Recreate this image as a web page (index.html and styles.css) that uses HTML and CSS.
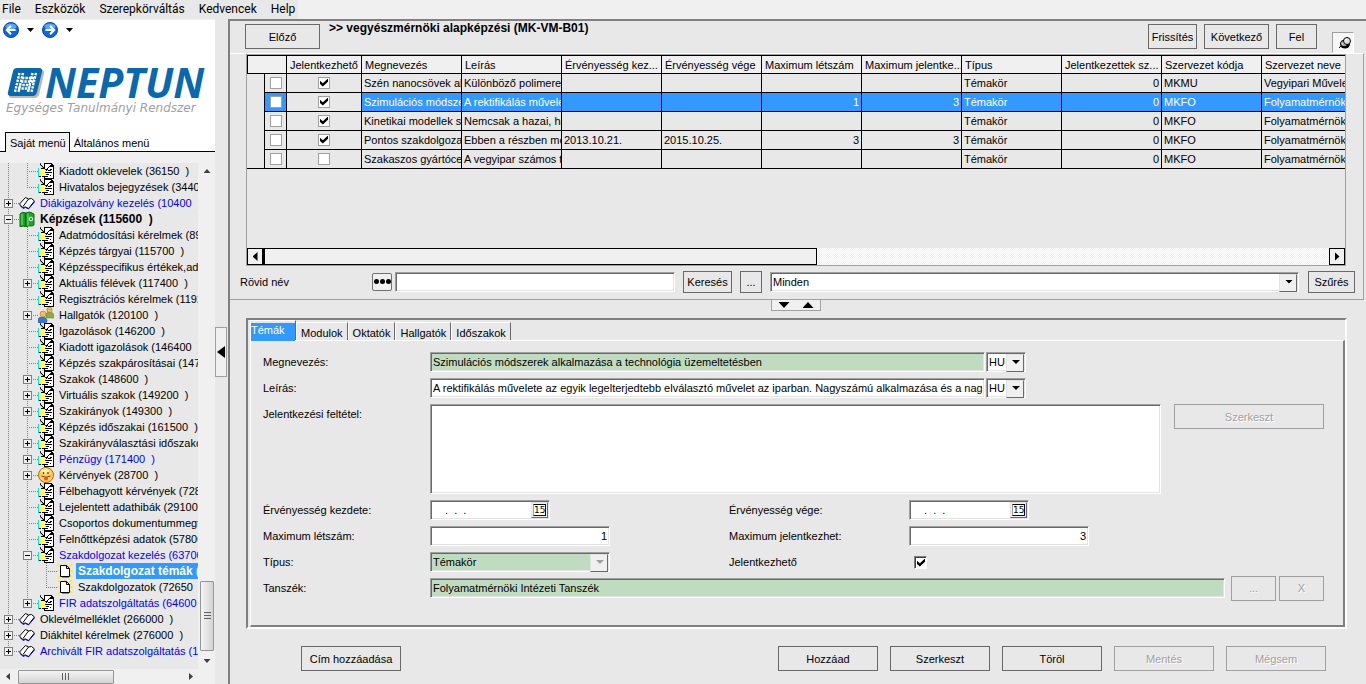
FILE: index.html
```html
<!DOCTYPE html>
<html lang="hu">
<head>
<meta charset="utf-8">
<title>Neptun</title>
<link rel="stylesheet" href="styles.css">
</head>
<body>
<svg class="defs" aria-hidden="true">
  <symbol id="i-doc" viewBox="0 0 16 16" shape-rendering="crispEdges">
    <path d="M6 0h7l3 3v13H6z" fill="#000"/>
    <path d="M7 1h6v3h2v11H7z" fill="#fff"/>
    <path d="M11 3h2v1h-2zM12 6h2v1h-2zM13 9h1v1h-1zM9 13h1v1H9zM12 12h1v1h-1z" fill="#000"/>
    <path d="M0 5h1v9H0z" fill="#00e5ee"/>
    <path d="M1 6h7v1h3v3h-1v2H8v1H3v-1H1z" fill="#ffff66"/>
    <path d="M3 5h3v1H3zM8 6h2v1H8zM10 7h3v1h-3zM7 9h6v1H7zM8 11h3v1H8zM4 13h5v1H4zM1 13h2v1H1z" fill="#000"/>
    <path d="M2 1h1v1h1v1h1v1h1v1h1v1h1v1h1v1H8V7H7V6H6V5H5V4H4V3H3V2H2z" fill="#000"/>
    <path d="M2 2h1v1h1v1h1v1H4V4H3V3H2z" fill="#c8b400"/>
    <path d="M2 0h1v1H2z" fill="#d00"/>
    <path d="M12 2h1v1h-1v1h-1v1h-1v1H9V5h1V4h1V3h1z" fill="#000"/>
  </symbol>
  <symbol id="i-book" viewBox="0 0 16 16">
    <path d="M.5 9L6.500 2.500l3 1.500 3-.5 3 2.500-6 7.500-3-1.500-3 .5z" fill="#fff" stroke="#000"/>
    <path d="M9.500 4L4 11.500" stroke="#000" fill="none"/>
    <path d="M1 10.500L4 13.500l2.500-1 3 1.500 6-7" stroke="#1a1aa0" fill="none"/>
  </symbol>
  <symbol id="i-green" viewBox="0 0 16 16">
    <path d="M1 3q2-3 6-1q4-2 6 0l2 1v11l-2 1q-3-1-6 1q-3-2-6 0z" fill="#1fa52b" stroke="#0b6a17"/>
    <path d="M3 3v11M9 2.500v12" stroke="#7be07c"/><path d="M6.500 2v13" stroke="#0b6a17" stroke-width="1.500"/>
    <circle cx="12" cy="8" r="1.800" fill="none" stroke="#fff"/>
  </symbol>
  <symbol id="i-users" viewBox="0 0 16 16">
    <path d="M8 11V8q0-3 3.500-3T16 8v3z" fill="#8cae3c" stroke="#5c7c20" stroke-width=".5"/><circle cx="11.500" cy="3" r="2.700" fill="#e7b75f" stroke="#93651c" stroke-width=".5"/>
    <path d="M0 16v-3q0-3 4-3t5 3v2q-4 2-9 1z" fill="#3d79d0" stroke="#1c4b93" stroke-width=".5"/><circle cx="5" cy="7" r="3" fill="#eebf68" stroke="#93651c" stroke-width=".5"/>
  </symbol>
  <symbol id="i-smile" viewBox="0 0 16 16">
    <circle cx="8" cy="8" r="7.500" fill="#ffcf5c" stroke="#a86c12"/>
    <ellipse cx="7" cy="4" rx="4" ry="2.500" fill="#fff2b0"/>
    <path d="M5.500 5v2M10 5v2" stroke="#704400" stroke-width="1.300"/>
    <path d="M3.500 9q4.500 2.500 9 0" stroke="#704400" fill="none"/><path d="M6 10.500h4v1.500q-2 3-4 0z" fill="#ee4939"/>
  </symbol>
  <symbol id="i-new" viewBox="0 0 16 16">
    <path d="M1 1l4 4M15 1l-4 4M1 15l4-4M15 14l-4-4M8 0v3M0 8h3M16 8h-3" stroke="#ffee00" stroke-width="1.500"/>
    <path d="M5 4h7v11H5z" fill="#888"/>
    <path d="M3.500 2.500h6l3 3v8h-9z" fill="#fff" stroke="#000"/><path d="M9.500 2.500v3h3" fill="none" stroke="#000"/>
  </symbol>
</svg>

<nav class="menubar"><a href="#">File</a><a href="#">Eszközök</a><a href="#">Szerepkörváltás</a><a href="#">Kedvencek</a><a href="#">Help</a></nav>

<div class="app">
  <aside class="side">
    <div class="brand">
      <div class="history">
        <button class="ball" aria-label="Vissza"><svg viewBox="0 0 16 16"><circle cx="8" cy="8" r="7.500" fill="#1167dc" stroke="#0a46a8"/><ellipse cx="8" cy="4.500" rx="5.500" ry="3" fill="#5aa6ff"/><path d="M12.500 8H4M8 3.800L3.800 8 8 12.200" fill="none" stroke="#fff" stroke-width="2"/></svg></button>
        <button class="drop" aria-label="Előzmények"></button>
        <button class="ball" aria-label="Előre"><svg viewBox="0 0 16 16"><circle cx="8" cy="8" r="7.500" fill="#1167dc" stroke="#0a46a8"/><ellipse cx="8" cy="4.500" rx="5.500" ry="3" fill="#5aa6ff"/><path d="M3.500 8H12M8 3.800L12.200 8 8 12.200" fill="none" stroke="#fff" stroke-width="2"/></svg></button>
        <button class="drop" aria-label="Következők"></button>
      </div>
      <div class="logo">
        <svg viewBox="0 0 38 31" width="38" height="31">
          <path d="M10 2h24q4 0 3 4l-5 21q-1 3-5 3H5q-4 0-3-3z" fill="#b9b9b9"/>
          <path d="M10 0h22q4 0 3 4l-5 20q-1 4-4 4H4q-4 0-3-4L6 3q1-3 4-3z" fill="#0a68ad"/>
          <g fill="none" stroke="#fff" stroke-width="2.400" stroke-dasharray="2.400 1"><path d="M12.500 5L8 24M16 5l-4.500 19M29 5l-4.500 19M25.500 5L21 24M15 10h12M14 13.500h14M12 17h12M11 20.500h12"/></g>
        </svg>
        <span class="name">NEPTUN</span>
      </div>
      <div class="slogan">Egységes Tanulmányi Rendszer</div>
      <div class="sidetabs"><button class="on">Saját menü</button><button>Általános menü</button></div>
    </div>
    <div class="treebox">
      <ul class="tree">
        <li class="l1"><svg><use href="#i-doc"/></svg><a href="#">Kiadott oklevelek (36150  )</a></li>
        <li class="l1 end"><svg><use href="#i-doc"/></svg><a href="#">Hivatalos bejegyzések (34400  )</a></li>
        <li class="l0"><button class="plus" aria-label="Kinyit"></button><svg><use href="#i-book"/></svg><a href="#" class="blue">Diákigazolvány kezelés (10400  )</a></li>
        <li class="l0"><button class="minus" aria-label="Becsuk"></button><svg><use href="#i-green"/></svg><a href="#" class="strong">Képzések (115600  )</a></li>
        <li class="l1"><svg><use href="#i-doc"/></svg><a href="#">Adatmódosítási kérelmek (89000  )</a></li>
        <li class="l1"><svg><use href="#i-doc"/></svg><a href="#">Képzés tárgyai (115700  )</a></li>
        <li class="l1"><svg><use href="#i-doc"/></svg><a href="#">Képzésspecifikus értékek,adatok</a></li>
        <li class="l1"><button class="plus" aria-label="Kinyit"></button><svg><use href="#i-doc"/></svg><a href="#">Aktuális félévek (117400  )</a></li>
        <li class="l1"><svg><use href="#i-doc"/></svg><a href="#">Regisztrációs kérelmek (119200  )</a></li>
        <li class="l1"><button class="plus" aria-label="Kinyit"></button><svg><use href="#i-users"/></svg><a href="#">Hallgatók (120100  )</a></li>
        <li class="l1"><svg><use href="#i-doc"/></svg><a href="#">Igazolások (146200  )</a></li>
        <li class="l1"><svg><use href="#i-doc"/></svg><a href="#">Kiadott igazolások (146400  )</a></li>
        <li class="l1"><svg><use href="#i-doc"/></svg><a href="#">Képzés szakpárosításai (147100  )</a></li>
        <li class="l1"><button class="plus" aria-label="Kinyit"></button><svg><use href="#i-doc"/></svg><a href="#">Szakok (148600  )</a></li>
        <li class="l1"><button class="plus" aria-label="Kinyit"></button><svg><use href="#i-doc"/></svg><a href="#">Virtuális szakok (149200  )</a></li>
        <li class="l1"><button class="plus" aria-label="Kinyit"></button><svg><use href="#i-doc"/></svg><a href="#">Szakirányok (149300  )</a></li>
        <li class="l1"><svg><use href="#i-doc"/></svg><a href="#">Képzés időszakai (161500  )</a></li>
        <li class="l1"><button class="plus" aria-label="Kinyit"></button><svg><use href="#i-doc"/></svg><a href="#">Szakirányválasztási időszakok</a></li>
        <li class="l1"><button class="plus" aria-label="Kinyit"></button><svg><use href="#i-doc"/></svg><a href="#" class="blue">Pénzügy (171400  )</a></li>
        <li class="l1"><button class="plus" aria-label="Kinyit"></button><svg><use href="#i-smile"/></svg><a href="#">Kérvények (28700  )</a></li>
        <li class="l1"><svg><use href="#i-doc"/></svg><a href="#">Félbehagyott kérvények (72850  )</a></li>
        <li class="l1"><svg><use href="#i-doc"/></svg><a href="#">Lejelentett adathibák (29100  )</a></li>
        <li class="l1"><svg><use href="#i-doc"/></svg><a href="#">Csoportos dokumentummegtekintés</a></li>
        <li class="l1"><svg><use href="#i-doc"/></svg><a href="#">Felnőttképzési adatok (57800  )</a></li>
        <li class="l1"><button class="minus" aria-label="Becsuk"></button><svg><use href="#i-doc"/></svg><a href="#" class="blue">Szakdolgozat kezelés (63700  )</a></li>
        <li class="l2"><svg><use href="#i-new"/></svg><a href="#" class="strong sel">Szakdolgozat témák (72600  )</a></li>
        <li class="l2 end"><svg><use href="#i-new"/></svg><a href="#">Szakdolgozatok (72650  )</a></li>
        <li class="l1 end"><button class="plus" aria-label="Kinyit"></button><svg><use href="#i-doc"/></svg><a href="#" class="blue">FIR adatszolgáltatás (64600  )</a></li>
        <li class="l0"><button class="plus" aria-label="Kinyit"></button><svg><use href="#i-book"/></svg><a href="#">Oklevélmelléklet (266000  )</a></li>
        <li class="l0"><button class="plus" aria-label="Kinyit"></button><svg><use href="#i-book"/></svg><a href="#">Diákhitel kérelmek (276000  )</a></li>
        <li class="l0 end"><button class="plus" aria-label="Kinyit"></button><svg><use href="#i-book"/></svg><a href="#" class="blue">Archivált FIR adatszolgáltatás (143000  )</a></li>
      </ul>
      <div class="vbar"><i class="tri up"></i><div class="vspace"></div><div class="vthumb"></div><i class="tri down"></i></div>
    </div>
    <div class="hbar"><i class="tri left"></i><div class="hthumb"></div><div class="hspace"></div><i class="tri right"></i></div>
  </aside>
  <div class="split"><button aria-label="Menü elrejtése"><i class="tri left"></i></button></div>

  <main class="main">
    <header class="toolbar">
      <button class="btn prev">Előző</button>
      <h1>&gt;&gt; vegyészmérnöki alapképzési (MK-VM-B01)</h1>
      <button class="btn w49">Frissítés</button>
      <button class="btn w65">Következő</button>
      <button class="btn w41">Fel</button>
      <button class="pin" aria-label="Rögzítés"><svg viewBox="0 0 12 12" width="12" height="12"><path d="M0 11l3-3" stroke="#000"/><ellipse cx="6" cy="7" rx="5" ry="4.500" fill="#000"/><ellipse cx="5" cy="6.500" rx="3" ry="2.500" fill="#bbb"/><circle cx="8" cy="4" r="3.500" fill="#ddd" stroke="#000"/><path d="M6 3.500l2-1.500" stroke="#fff" stroke-width="1.500"/></svg></button>
    </header>

    <section class="list">
      <div class="grid">
        <div class="gridclip">
        <table>
          <colgroup><col class="c1"><col class="c2"><col class="c3"><col span="10" class="c4"></colgroup>
          <thead><tr><th colspan="2" class="first"></th><th>Jelentkezhető</th><th>Megnevezés</th><th>Leírás</th><th>Érvényesség kez...</th><th>Érvényesség vége</th><th>Maximum létszám</th><th>Maximum jelentke...</th><th>Típus</th><th>Jelentkezettek sz...</th><th>Szervezet kódja</th><th>Szervezet neve</th></tr></thead>
          <tbody>
          <tr><td class="gut"></td><td class="ck"><input type="checkbox" aria-label="Kijelölés"></td><td class="ck"><input type="checkbox" checked aria-label="Jelentkezhető"></td><td>Szén nanocsövek alkalmazása</td><td>Különböző polimerek</td><td></td><td></td><td></td><td></td><td>Témakör</td><td class="n">0</td><td>MKMU</td><td>Vegyipari Műveleti</td></tr>
          <tr class="cur"><td class="gut"></td><td class="ck hot"><input type="checkbox" aria-label="Kijelölés"></td><td class="ck"><input type="checkbox" checked aria-label="Jelentkezhető"></td><td>Szimulációs módszerek</td><td>A rektifikálás művelete</td><td></td><td></td><td class="n">1</td><td class="n">3</td><td>Témakör</td><td class="n">0</td><td>MKFO</td><td>Folyamatmérnöki</td></tr>
          <tr><td class="gut"></td><td class="ck"><input type="checkbox" aria-label="Kijelölés"></td><td class="ck"><input type="checkbox" checked aria-label="Jelentkezhető"></td><td>Kinetikai modellek stb.</td><td>Nemcsak a hazai, hanem</td><td></td><td></td><td></td><td></td><td>Témakör</td><td class="n">0</td><td>MKFO</td><td>Folyamatmérnöki</td></tr>
          <tr><td class="gut"></td><td class="ck"><input type="checkbox" aria-label="Kijelölés"></td><td class="ck"><input type="checkbox" checked aria-label="Jelentkezhető"></td><td>Pontos szakdolgozat</td><td>Ebben a részben meg</td><td>2013.10.21.</td><td>2015.10.25.</td><td class="n">3</td><td class="n">3</td><td>Témakör</td><td class="n">0</td><td>MKFO</td><td>Folyamatmérnöki</td></tr>
          <tr><td class="gut last"></td><td class="ck"><input type="checkbox" aria-label="Kijelölés"></td><td class="ck"><input type="checkbox" aria-label="Jelentkezhető"></td><td>Szakaszos gyártócellák</td><td>A vegyipar számos terü</td><td></td><td></td><td></td><td></td><td>Témakör</td><td class="n">0</td><td>MKFO</td><td>Folyamatmérnöki</td></tr>
          </tbody>
        </table>
        </div>
        <div class="gbar"><button aria-label="Balra"><i class="tri left"></i></button><div class="gthumb"></div><div class="gtrack"></div><button aria-label="Jobbra"><i class="tri right"></i></button></div>
      </div>
      <div class="search">
        <label for="q">Rövid név</label>
        <button class="dots" aria-label="Mezők"><i></i><i></i><i></i></button>
        <input class="box q" id="q" type="text">
        <button class="btn w49">Keresés</button>
        <button class="btn more">...</button>
        <span class="combo wide"><select aria-label="Szűrő"><option>Minden</option></select></span>
        <button class="btn filter">Szűrés</button>
      </div>
    </section>
    <button class="updown" aria-label="Osztás"><i class="tri down"></i><i class="tri up"></i></button>

    <section class="book">
      <div class="tabs"><button class="on"><span>Témák</span></button><button>Modulok</button><button>Oktatók</button><button>Hallgatók</button><button>Időszakok</button></div>
      <form class="page">
        <div class="row"><label class="lab" for="f1">Megnevezés:</label><input class="box long green" id="f1" type="text" value="Szimulációs módszerek alkalmazása a technológia üzemeltetésben"><span class="combo lang"><select aria-label="Nyelv"><option>HU</option></select></span></div>
        <div class="row"><label class="lab" for="f2">Leírás:</label><input class="box long" id="f2" type="text" value="A rektifikálás művelete az egyik legelterjedtebb elválasztó művelet az iparban. Nagyszámú alkalmazása és a nagy energia"><span class="combo lang"><select aria-label="Nyelv"><option>HU</option></select></span></div>
        <div class="row tall"><label class="lab" for="f3">Jelentkezési feltétel:</label><textarea class="box" id="f3"></textarea><button type="button" class="btn edit" disabled>Szerkeszt</button></div>
        <div class="row"><label class="lab" for="f4">Érvényesség kezdete:</label><div class="cell"><span class="date"><input class="box" id="f4" type="text" value=".  .  ."><button type="button" aria-label="Naptár"><span>15</span></button></span></div><label class="lab2" for="f5">Érvényesség vége:</label><span class="date"><input class="box" id="f5" type="text" value=".  .  ."><button type="button" aria-label="Naptár"><span>15</span></button></span></div>
        <div class="row"><label class="lab" for="f6">Maximum létszám:</label><div class="cell"><input class="box num" id="f6" type="text" value="1"></div><label class="lab2" for="f7">Maximum jelentkezhet:</label><input class="box num" id="f7" type="text" value="3"></div>
        <div class="row"><label class="lab" for="f8">Típus:</label><div class="cell"><span class="combo type off"><select id="f8" class="green"><option>Témakör</option></select></span></div><label class="lab2" for="f9">Jelentkezhető</label><input type="checkbox" class="sunk" id="f9" checked></div>
        <div class="row"><label class="lab" for="f10">Tanszék:</label><input class="box green dept" id="f10" type="text" value="Folyamatmérnöki Intézeti Tanszék"><button type="button" class="btn w45" disabled>...</button><button type="button" class="btn w45" disabled>X</button></div>
      </form>
    </section>

    <footer class="actions">
      <button class="btn">Cím hozzáadása</button><span class="fill"></span>
      <button class="btn">Hozzáad</button><button class="btn">Szerkeszt</button><button class="btn">Töröl</button><button class="btn" disabled>Mentés</button><button class="btn" disabled>Mégsem</button>
    </footer>
  </main>
</div>
</body>
</html>
```
FILE: styles.css
```css
* { box-sizing: border-box; }
body {
  margin: 0;
  min-height: 100vh;
  display: flex;
  flex-direction: column;
  background: #e8e8e8;
  color: #000;
  font: 11px/14px "Liberation Sans", Arial, sans-serif;
  overflow: hidden;
}
button, input, select, textarea { font: inherit; color: inherit; margin: 0; }
button { padding: 0; background: none; border: 0; white-space: nowrap; }
a { color: inherit; text-decoration: none; }
.defs { display: none; }

.menubar {
  display: flex;
  gap: 14px;
  height: 19px;
  padding-left: 2px;
  background: linear-gradient(90deg, #e8e8e8 298px, #f0f0f0 298px);
  font: 12px/18px Roboto, sans-serif;
}
.app { display: flex; flex: 1; }

/* arrows */
.tri { display: block; width: 8px; height: 8px; background: #000; flex: none; }
.tri.left { width: 5px; clip-path: polygon(100% 0, 0 50%, 100% 100%); }
.tri.right { width: 5px; clip-path: polygon(0 0, 100% 50%, 0 100%); }
.tri.up { height: 5px; clip-path: polygon(0 100%, 50% 0, 100% 100%); }
.tri.down { height: 5px; clip-path: polygon(0 0, 50% 100%, 100% 0); }

/* sidebar */
.side { width: 215px; flex: none; display: flex; flex-direction: column; background: #f0f0f0; }
.brand { background: #fff; border-top: 1px solid #f0f0f0; height: 133px; display: flex; flex-direction: column; }
.history { display: flex; align-items: center; gap: 8px; padding: 2px 3px 0; }
.ball { width: 16px; height: 16px; }
.ball svg { display: block; width: 16px; height: 16px; }
.drop { width: 7px; height: 4px; background: #000; clip-path: polygon(0 0, 50% 100%, 100% 0); }
.logo { display: flex; padding: 30px 0 0 7px; height: 61px; }
.logo svg { flex: none; }
.name { font: italic bold 41px/28px "Open Sans", sans-serif; color: #0a68ad; }
.slogan { padding-left: 6px; font: italic 12px/18px "DejaVu Sans", sans-serif; color: #a0a0a0; white-space: nowrap; }
.sidetabs { display: flex; margin-top: auto; background: linear-gradient(#000, #000) 0 100% / 100% 1px no-repeat; padding-left: 5px; }
.sidetabs button { height: 20px; padding: 2px 3px 0 4px; }
.sidetabs .on { background: #f0f0f0; border: 1px solid #000; border-bottom: 0; padding-top: 1px; }

.treebox { display: flex; flex: 1; padding-top: 11px; }
.tree { list-style: none; margin: 0; padding: 0; width: 198px; background: #e8e8e8; overflow: hidden; }
.tree li {
  --dot: linear-gradient(#808080 50%, transparent 50%);
  --dash: linear-gradient(90deg, #808080 50%, transparent 50%);
  height: 16px;
  display: flex;
  align-items: center;
  position: relative;
  white-space: pre;
}
.tree svg { width: 16px; height: 16px; flex: none; }
.tree a { line-height: 16px; padding: 0 2px; margin-left: 3px; }
.l0 { padding-left: 19px; }
.l1 { padding-left: 38px; }
.l2 { padding-left: 57px; }
.tree li::before { content: ""; position: absolute; top: 0; left: 8px; width: 1px; height: 16px; background: var(--dot) 0 0 / 1px 2px; }
.tree li::after { content: ""; position: absolute; top: 0; height: 16px; pointer-events: none; }
.l0::after { left: 8px; width: 11px; background: var(--dash) 0 8px / 2px 1px repeat-x; }
.l1::after { left: 27px; width: 11px; background: var(--dash) 0 8px / 2px 1px repeat-x, var(--dot) 0 0 / 1px 2px repeat-y; }
.l2::after { left: 46px; width: 11px; background: var(--dash) 0 8px / 2px 1px repeat-x, var(--dot) 0 0 / 1px 2px repeat-y; }
.tree .l2::before { width: 20px; background: var(--dot) 0 0 / 1px 2px repeat-y, var(--dot) 19px 0 / 1px 2px repeat-y; }
.tree .end::after { height: 9px; }
.tree .l0.end::before { height: 9px; }
.plus, .minus {
  position: absolute; z-index: 1; top: 4px; left: 4px; width: 9px; height: 9px;
  border: 1px solid #808080;
  background: linear-gradient(#000, #000) 1px 3px / 5px 1px no-repeat, linear-gradient(#000, #000) 3px 1px / 1px 5px no-repeat, #f0f0f0;
}
.minus { background: linear-gradient(#000, #000) 1px 3px / 5px 1px no-repeat, #f0f0f0; }
.l1 .plus, .l1 .minus { left: 23px; }
.blue { color: #0000ff; }
.strong { font-weight: bold; font-size: 12px; }
.sel { background: #3399ff; color: #fff; }

.vbar { width: 16px; margin-left: 1px; display: flex; flex-direction: column; align-items: center; padding: 6px 0 6px; }
.vbar .tri, .hbar .tri { background: #404040; }
.vbar .tri { width: 7px; height: 4px; }
.vspace { flex: 1; }
.vthumb { width: 14px; height: 70px; margin-bottom: 8px; border: 1px solid #959595; border-radius: 1px;
  background: repeating-linear-gradient(#606060 0 1px, transparent 1px 3px) 50% 50% / 7px 8px no-repeat, linear-gradient(90deg, #f4f4f4, #d4d4d4); }
.hbar { height: 15px; display: flex; align-items: center; padding: 0 22px 0 6px; }
.hbar .tri { width: 4px; height: 7px; }
.hthumb { width: 96px; height: 14px; margin-left: 8px; border: 1px solid #959595; border-radius: 1px;
  background: repeating-linear-gradient(90deg, #606060 0 1px, transparent 1px 3px) 50% 50% / 8px 7px no-repeat, linear-gradient(#f4f4f4, #d4d4d4); }
.hspace { flex: 1; }
.split { width: 13px; padding-top: 308px; flex: none; }
.split button { width: 12px; height: 50px; border: 1px solid #a0a0a0; background: #f0f0f0; }
.split .tri { width: 8px; height: 12px; margin-left: 1px; }

/* main */
.main { flex: 1; min-width: 0; border: solid #808080; border-width: 2px 0 0 2px; padding-right: 2px; display: flex; flex-direction: column; }
.btn { border: 1px solid #696969; background: #e8e8e8; flex: none; height: 25px; }
.btn:disabled { border-color: #a0a0a0; color: #a0a0a0; text-shadow: 1px 1px #fff; }
.toolbar { display: flex; align-items: flex-start; height: 32px; padding: 3px 10px 0 15px; gap: 7px; }
.toolbar h1 { flex: 1; margin: -3px 0 0 2px; font-size: 12px; line-height: 14px; white-space: nowrap; }
.prev { width: 75px; }
.w49 { width: 49px; }
.w65 { width: 65px; }
.w41 { width: 41px; }
.w45 { width: 45px; }
.pin { width: 22px; height: 21px; margin: 8px 0 0 8px; background: #f6f6f6; border: 1px solid; border-color: #a0a0a0 #fff #fff #a0a0a0; display: grid; place-items: center; padding-left: 4px; }

.list { border-top: 1px solid #fff; border-right: 1px solid #a0a0a0; border-bottom: 1px solid #a0a0a0; }
.grid { margin: 0 17px 0 16px; border: 1px solid #a0a0a0; }
.gridclip { height: 193px; overflow: hidden; border-top: 1px solid #000; }
table { width: 1115px; table-layout: fixed; border-collapse: separate; border-spacing: 0; }
.c1 { width: 18px; }
.c2 { width: 22px; }
.c3 { width: 75px; }
.c4 { width: 100px; }
th, td { padding: 0 2px 1px; border: solid #000; border-width: 0 1px 1px 0; text-align: left; font-weight: normal; white-space: nowrap; overflow: hidden; height: 19px; line-height: 14px; }
th { height: 18px; padding: 0 0 0 3px; background: #f0f0f0; }
th.first { border-left-width: 1px; }
.gut { border-bottom-width: 0; }
.last { border-bottom-width: 1px; }
.n { text-align: right; }
.cur td { background: #3399ff; color: #fff; }
.cur .gut, .cur .ck { background: #e8e8e8; }
.cur .hot { background: #3399ff; }
[type=checkbox] { appearance: none; width: 12px; height: 12px; border: 1px solid #a0a0a0; background: #fff; display: block; position: relative; }
.ck input { margin: 0 auto; }
[type=checkbox]:checked::before { content: ""; position: absolute; left: 1px; top: 1px; width: 8px; height: 8px; background: #000; clip-path: polygon(0 28%, 36% 60%, 100% 0, 100% 40%, 36% 100%, 0 70%); }

.gbar { display: flex; height: 17px; }
.gbar button { width: 16px; border: 1px solid #000; background: #f0f0f0; display: grid; place-items: center; flex: none; }
.gbar .tri { height: 9px; }
.gthumb { flex: 0 1 554px; border: 1px solid #000; border-left-width: 2px; background: #f0f0f0; }
.gtrack { flex: 1; background: repeating-conic-gradient(#fff 0 25%, #f0f0f0 0 50%) 0 0 / 2px 2px; }

.search { display: flex; align-items: center; height: 33px; padding: 0 8px 2px 10px; }
.search label { width: 132px; }
.dots { width: 20px; height: 18px; border: 1px solid #707070; border-radius: 2px; background: #f0f0f0; display: flex; align-items: center; justify-content: center; gap: 1px; }
.dots i { width: 5px; height: 5px; border-radius: 50%; background: #000; }
.search .btn { height: 22px; }
.q { width: 280px; margin: 0 8px 0 3px; }
.more { width: 22px; margin: 0 8px; }
.filter { width: 47px; margin-left: 9px; }

.box, select { height: 20px; border: 1px solid; border-color: #a0a0a0 #fff #fff #a0a0a0; border-radius: 0; background: #fff; box-shadow: inset 1px 1px #696969, inset -1px -1px #e3e3e3; padding: 0 2px; outline: 0; }
.combo { position: relative; display: block; flex: none; }
.combo select { appearance: none; display: block; width: 100%; padding: 0 16px 0 2px; }
.combo::before { content: ""; position: absolute; right: 2px; top: 2px; width: 16px; height: 16px; background: #f0f0f0; border: 1px solid; border-color: #e3e3e3 #696969 #696969 #e3e3e3; pointer-events: none; }
.combo::after { content: ""; position: absolute; right: 6px; top: 8px; width: 8px; height: 4px; background: #000; clip-path: polygon(0 0, 50% 100%, 100% 0); pointer-events: none; }
.combo.off::after { background: #a0a0a0; }
.combo.wide { flex: 1; }
.green, select.green { background: #c0dcc0; }
.updown { width: 50px; height: 11px; margin-left: 541px; border: 1px solid #a0a0a0; border-top: 0; background: #f0f0f0; display: flex; align-items: center; justify-content: space-around; }
.updown .tri { width: 11px; height: 6px; }

.book { margin: 7px 17px 0 16px; border: 2px solid; border-color: #808080 #fff #fff #808080; padding: 0 0 0 2px; }
.tabs { display: flex; align-items: flex-end; height: 20px; }
.tabs button { height: 18px; padding: 2px 4px 0; border: 1px solid; border-color: #fff #696969 transparent #fff; border-bottom: 0; }
.tabs .on { height: 20px; padding: 2px 0 0; width: 46px; text-align: left; }
.tabs .on span { display: block; height: 18px; width: 44px; background: #3399ff; color: #fff; }
.page { border: solid; border-width: 1px 2px 2px 1px; border-color: #fff #808080 #808080 #fff; height: 287px; padding: 11px 19px 0 12px; display: flex; flex-direction: column; gap: 6px; }
.row { display: flex; height: 20px; align-items: center; }
.lab { width: 167px; flex: none; }
.long { flex: 0 1 555px; margin-right: 1px; min-width: 0; }
.lang { width: 40px; }
.tall { height: 90px; align-items: flex-start; }
.tall .lab { padding-top: 3px; }
textarea { flex: 1; height: 90px !important; resize: none; display: block; }
.edit { width: 150px; margin-left: 13px; }
.cell { width: 299px; flex: none; display: flex; }
.lab2 { width: 180px; flex: none; }
.num { width: 180px; text-align: right; }
.type { width: 180px; }
.date { position: relative; display: block; width: 120px; }
.date .box { width: 120px; display: block; padding-left: 14px; white-space: pre; }
.date button { position: absolute; right: 2px; top: 2px; width: 17px; height: 16px; background: #f0f0f0; border: 1px solid; border-color: #e3e3e3 #696969 #696969 #e3e3e3; display: grid; place-items: center; }
.date button span { width: 13px; height: 12px; border: 1px solid; border-color: #000 #000080 #000080 #a0a0a0; background: #fff; font: 9px/10px "DejaVu Sans", sans-serif; text-align: center; }
.sunk { width: 13px; height: 13px; margin-left: 5px; border-color: #808080 #fff #fff #808080; box-shadow: inset 1px 1px #404040; }
.sunk[type=checkbox]:checked::before { left: 2px; top: 2px; }
.dept { flex: 1; margin-right: 6px; }
.dept ~ .btn + .btn { margin-left: 3px; }

.actions { display: flex; gap: 12px; padding: 17px 38px 12px 71px; }
.actions .btn { width: 100px; }
.fill { flex: 1; }
```
